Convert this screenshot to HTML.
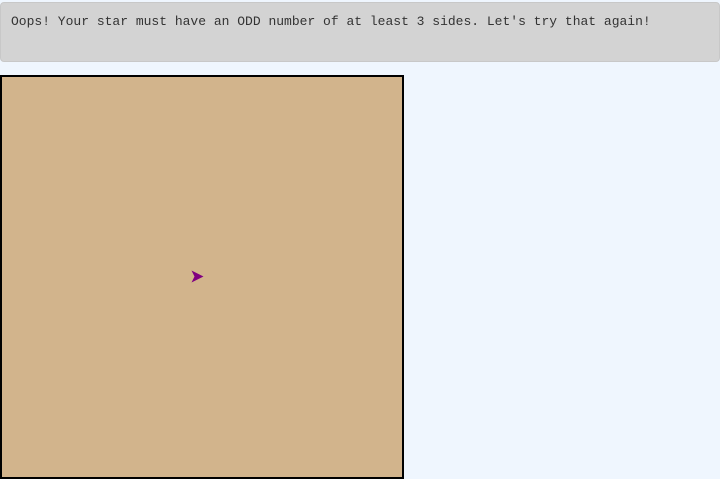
<!DOCTYPE html>
<html><head><style>
html,body{margin:0;padding:0;background:#eff6fe;width:720px;height:478px;overflow:hidden}
.msg{position:absolute;left:0;top:2px;width:718px;height:58px;background:#d3d3d3;border:1px solid #c8c8c8;border-radius:4px;font-family:"Liberation Mono",monospace;font-size:13px;color:#333;}
.msg span{position:absolute;left:10px;top:11px;white-space:pre}
.cv{position:absolute;left:0;top:75px;width:400px;height:400px;background:#d2b48c;border:2px solid #000}
</style></head><body>
<div class="msg"><span>Oops! Your star must have an ODD number of at least 3 sides. Let's try that again!</span></div>
<div class="cv"></div>
<svg style="position:absolute;left:0;top:0" width="720" height="478"><path d="M191.5 270.5 L203.5 276.5 L191.5 282.5 L194.5 276.5 Z" fill="#800080"/></svg>
</body></html>
